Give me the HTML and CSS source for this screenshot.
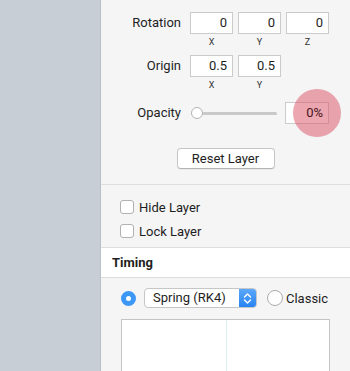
FILE: index.html
```html
<!DOCTYPE html>
<html lang="en">
<head>
    <meta charset="UTF-8">
    <meta name="viewport" content="width=device-width, initial-scale=1.0">
    <title>Layer Inspector</title>
    <link rel="stylesheet" href="styles.css">
</head>
<body>
    <div class="sidebar"></div>

    <div class="panel">
        <div class="top-rule"></div>

        <div class="transform">
            <div class="row">
                <div class="row-label">Rotation</div>
                <div class="fields">
                    <div class="field"><div class="box">0</div><div class="caption">X</div></div>
                    <div class="field"><div class="box">0</div><div class="caption">Y</div></div>
                    <div class="field"><div class="box">0</div><div class="caption">Z</div></div>
                </div>
            </div>

            <div class="row">
                <div class="row-label">Origin</div>
                <div class="fields">
                    <div class="field"><div class="box">0.5</div><div class="caption">X</div></div>
                    <div class="field"><div class="box">0.5</div><div class="caption">Y</div></div>
                </div>
            </div>

            <div class="row opacity-row">
                <div class="row-label">Opacity</div>
                <div class="slider">
                    <div class="track"></div>
                    <div class="knob"></div>
                </div>
                <div class="box opacity-box"><span class="opacity-value">0%</span></div>
                <div class="touch"></div>
            </div>

            <div class="reset-wrap">
                <button class="reset-button">Reset Layer</button>
            </div>
        </div>

        <div class="toggles">
            <label class="check-row"><span class="checkbox"></span>Hide Layer</label>
            <label class="check-row"><span class="checkbox"></span>Lock Layer</label>
        </div>

        <div class="section-header">Timing</div>

        <div class="timing">
            <div class="curve-row">
                <span class="radio radio-on"></span>
                <div class="select">
                    <span class="select-text">Spring (RK4)</span>
                    <span class="stepper">
                        <svg width="9" height="13" viewBox="0 0 9 13">
                            <path d="M1.5 5 L4.5 2 L7.5 5" fill="none" stroke="#fff" stroke-width="1.4" stroke-linecap="round" stroke-linejoin="round"/>
                            <path d="M1.5 8 L4.5 11 L7.5 8" fill="none" stroke="#fff" stroke-width="1.4" stroke-linecap="round" stroke-linejoin="round"/>
                        </svg>
                    </span>
                </div>
                <span class="radio"></span>
                <span class="radio-text">Classic</span>
            </div>

            <div class="graph">
                <div class="graph-axis"></div>
            </div>
        </div>
    </div>
</body>
</html>
```

FILE: styles.css
```css
* {
    margin: 0;
    padding: 0;
    box-sizing: border-box;
}

body {
    width: 350px;
    height: 371px;
    overflow: hidden;
    display: flex;
    font-family: Roboto, 'Liberation Sans', Arial, sans-serif;
    font-size: 13px;
    color: #1e1e1e;
    background-color: #c8ced5;
}

.sidebar {
    width: 100px;
    flex-shrink: 0;
    background-color: #c8ced5;
}

.panel {
    flex: 1;
    background-color: #f5f5f5;
    border-left: 1px solid #b9bfc6;
    display: flex;
    flex-direction: column;
}

.top-rule {
    margin-top: 2px;
    height: 1px;
    background-color: #e3e3e3;
}

.transform {
    padding: 10px 0 15px;
    border-bottom: 1px solid #dedede;
}

.row {
    display: flex;
    align-items: flex-start;
    margin-bottom: 7px;
}

.row-label {
    width: 80px;
    margin-right: 9px;
    text-align: right;
    line-height: 22px;
}

.fields {
    display: flex;
    gap: 5px;
}

.field {
    width: 43px;
    display: flex;
    flex-direction: column;
    align-items: center;
}

.box {
    width: 100%;
    height: 22px;
    background-color: white;
    border: 1px solid #cbcbcb;
    text-align: right;
    padding-right: 5px;
    line-height: 20px;
}

.caption {
    font-size: 9px;
    line-height: 12px;
    margin-top: 2px;
    color: #333;
}

.opacity-row {
    position: relative;
    margin-top: 11px;
    margin-bottom: 0;
    align-items: center;
}

.slider {
    position: relative;
    width: 87px;
    height: 22px;
    margin-right: 8px;
}

.track {
    position: absolute;
    left: 2px;
    right: 0;
    top: 10px;
    height: 3px;
    border-radius: 2px;
    background-color: #c9c9c9;
}

.knob {
    position: absolute;
    left: 1px;
    top: 5px;
    width: 12px;
    height: 12px;
    border-radius: 50%;
    background-color: white;
    border: 1px solid #b3b3b3;
}

.opacity-box {
    width: 44px;
}

.opacity-value {
    position: relative;
    z-index: 2;
    color: #4a1420;
}

.touch {
    position: absolute;
    z-index: 1;
    left: 192px;
    top: -13px;
    width: 48px;
    height: 48px;
    border-radius: 50%;
    background-color: rgba(218, 92, 112, 0.55);
}

.reset-wrap {
    display: flex;
    justify-content: center;
    margin-top: 24px;
}

.reset-button {
    width: 98px;
    height: 21px;
    font-family: inherit;
    font-size: 13px;
    color: #1e1e1e;
    background-color: white;
    border: 1px solid #c6c6c6;
    border-bottom-color: #b3b3b3;
    border-radius: 4px;
    box-shadow: 0 1px 1px rgba(0, 0, 0, 0.05);
}

.toggles {
    padding: 15px 0 9px 19px;
    display: flex;
    flex-direction: column;
    gap: 10px;
    border-bottom: 1px solid #dedede;
}

.check-row {
    display: flex;
    align-items: center;
    height: 14px;
}

.checkbox {
    width: 14px;
    height: 14px;
    margin-right: 5px;
    background-color: white;
    border: 1px solid #b1b1b1;
    border-radius: 3px;
}

.section-header {
    height: 30px;
    line-height: 29px;
    padding-left: 11px;
    font-weight: bold;
    background-color: white;
    border-bottom: 1px solid #dcdcdc;
}

.timing {
    flex: 1;
    padding: 10px 0 0 20px;
}

.curve-row {
    display: flex;
    align-items: center;
    height: 20px;
}

.radio {
    width: 16px;
    height: 16px;
    border-radius: 50%;
    background-color: white;
    border: 1px solid #ababab;
    flex-shrink: 0;
}

.radio-on {
    background-color: #3d97f7;
    border: 5px solid #3d97f7;
    width: 15px;
    height: 15px;
    position: relative;
}

.radio-on::after {
    content: "";
    position: absolute;
    left: 0;
    top: 0;
    width: 5px;
    height: 5px;
    border-radius: 50%;
    background-color: white;
}

.select {
    display: flex;
    align-items: stretch;
    width: 113px;
    height: 20px;
    margin: 0 10px 0 8px;
    border: 1px solid #c6c6c6;
    border-radius: 4px;
    background-color: white;
    overflow: hidden;
}

.select-text {
    flex: 1;
    padding-left: 8px;
    line-height: 18px;
}

.stepper {
    width: 17px;
    display: flex;
    align-items: center;
    justify-content: center;
    background: linear-gradient(#5aa8fb, #2a83f2);
}

.radio-text {
    margin-left: 3px;
}

.graph {
    position: relative;
    width: 209px;
    height: 52px;
    margin-top: 11px;
    background-color: white;
    border: 1px solid #c4c4c4;
    border-bottom: none;
}

.graph-axis {
    position: absolute;
    left: 104px;
    top: 0;
    bottom: 0;
    width: 1px;
    background-color: #ddeef5;
}
```
